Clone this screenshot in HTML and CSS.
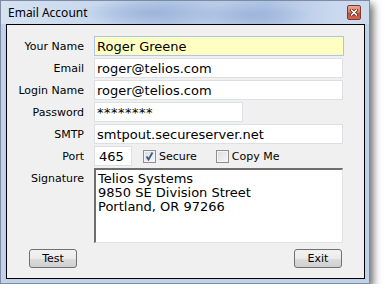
FILE: index.html
```html
<!DOCTYPE html>
<html lang="en">
<head>
  <meta charset="UTF-8">
  <meta name="viewport" content="width=device-width, initial-scale=1.0">
  <title>Email Account</title>
  <link rel="stylesheet" href="styles.css">
</head>
<body>
  <div class="window">
    <div class="titlebar">
      <span class="title">Email Account</span>
      <span class="close">
        <svg width="8" height="7" viewBox="0 0 8 7">
          <path d="M1 0.5 L7 6.5 M7 0.5 L1 6.5" stroke="#5a1c10" stroke-width="3" stroke-linecap="square"/>
          <path d="M1 0.5 L7 6.5 M7 0.5 L1 6.5" stroke="#fff" stroke-width="1.6"/>
        </svg>
      </span>
    </div>

    <div class="client">
      <div class="fields">
        <label for="name">Your Name</label>
        <input type="text" id="name" class="current" value="Roger Greene">

        <label for="email">Email</label>
        <input type="text" id="email" value="roger@telios.com">

        <label for="login">Login Name</label>
        <input type="text" id="login" value="roger@telios.com">

        <label for="password">Password</label>
        <input type="text" id="password" class="short" value="********">

        <label for="smtp">SMTP</label>
        <input type="text" id="smtp" value="smtpout.secureserver.net">

        <label for="port">Port</label>
        <div class="port-row">
          <input type="text" id="port" class="port" value="465">
          <span class="check on">
            <svg width="11" height="11" viewBox="0 0 11 11">
              <path d="M2.5 5.5 L4.5 8.5 L8.5 1.5" fill="none" stroke="#3d5a8a" stroke-width="1.8"/>
            </svg>
          </span>
          <span class="check-label">Secure</span>
          <span class="check copy"></span>
          <span class="check-label">Copy Me</span>
        </div>

        <label for="signature" class="top">Signature</label>
        <textarea id="signature">Telios Systems
9850 SE Division Street
Portland, OR 97266</textarea>
      </div>

      <div class="actions">
        <button>Test</button>
        <button>Exit</button>
      </div>
    </div>
  </div>
</body>
</html>
```

FILE: styles.css
```css
body {
  margin: 0;
  background: #fff;
  font-family: "DejaVu Sans", Verdana, sans-serif;
}
.window {
  box-sizing: border-box;
  width: 370px;
  height: 284px;
  border: 1px solid #7d8ca3;
  padding: 0 4px 4px 5px;
  background: #c0d2eb;
  box-shadow: 3px 4px 8px rgba(0,0,0,0.6);
}
.titlebar {
  height: 23px;
  margin: 0 -4px 0 -5px;
  display: flex;
  justify-content: space-between;
  align-items: flex-start;
  background:
    radial-gradient(ellipse 70px 14px at 150px 12px, rgba(150,175,215,0.8), rgba(150,175,215,0)),
    radial-gradient(ellipse 60px 12px at 250px 14px, rgba(150,175,215,0.7), rgba(150,175,215,0)),
    linear-gradient(90deg, #d6e2f2 0%, #c8d8ee 25%, #b3c8e6 45%, #b8cbe7 60%, #adc3e3 72%, #c9d8ee 90%, #cddbef 100%);
}
.title {
  font-family: "Noto Sans", "Open Sans", sans-serif;
  font-size: 12px;
  line-height: 16px;
  padding: 4px 0 0 7px;
  color: #000;
}
.close {
  box-sizing: border-box;
  width: 14px;
  height: 15px;
  margin: 4px 8px 0 0;
  border: 1px solid #7b3a2c;
  border-radius: 2px;
  background: linear-gradient(#eba896, #d6725b 50%, #c24a32 51%, #d0664e);
  display: flex;
  align-items: center;
  justify-content: center;
}
.client {
  box-sizing: border-box;
  height: 255px;
  border: 1px solid #000;
  background: #f0f0f0;
  padding: 11px 0 0 0;
}
.fields {
  display: grid;
  grid-template-columns: 77px 249px;
  grid-template-rows: repeat(6, 20px) 75px;
  column-gap: 10px;
  row-gap: 2px;
}
label {
  font-size: 11px;
  text-align: right;
  align-self: center;
  color: #000;
}
label.top {
  align-self: start;
  padding-top: 4px;
}
input, textarea {
  box-sizing: border-box;
  margin: 0;
  border: 1px solid #dcdfe4;
  background: #fff;
  font-family: "DejaVu Sans", Verdana, sans-serif;
  font-size: 13px;
  color: #000;
  padding: 0 2px;
  height: 20px;
  width: 249px;
  outline: none;
}
input.current {
  width: 250px;
  background: #ffffc4;
  border-color: #a9c6e6;
}
input.short {
  width: 149px;
  letter-spacing: 0.5px;
}
.port-row {
  display: flex;
  align-items: center;
}
input.port {
  width: 38px;
  padding-left: 4px;
}
.check {
  box-sizing: border-box;
  width: 13px;
  height: 13px;
  border: 1px solid #8e8f8f;
  background: linear-gradient(135deg, #dcdcdc, #f6f6f6);
  box-shadow: inset 0 0 0 1px #f4f4f4;
  margin-left: 11px;
  display: flex;
  align-items: center;
  justify-content: center;
}
.check.copy {
  margin-left: 19px;
}
.check-label {
  font-size: 11px;
  margin-left: 3px;
}
textarea {
  height: 75px;
  resize: none;
  line-height: 14px;
  padding: 2px 2px;
  border-width: 2px 1px 1px 2px;
  border-style: solid;
  border-color: #6e6e6e #e3e3e3 #e3e3e3 #6e6e6e;
  overflow: hidden;
}
.actions {
  display: flex;
  justify-content: space-between;
  padding: 6px 22px 0 22px;
}
button {
  box-sizing: border-box;
  width: 48px;
  height: 19px;
  padding: 0;
  border: 1px solid #707070;
  border-radius: 3px;
  background: linear-gradient(#f2f2f2, #ebebeb 50%, #dddddd 51%, #cfcfcf);
  font-family: "DejaVu Sans", Verdana, sans-serif;
  font-size: 11px;
  color: #000;
}
```
